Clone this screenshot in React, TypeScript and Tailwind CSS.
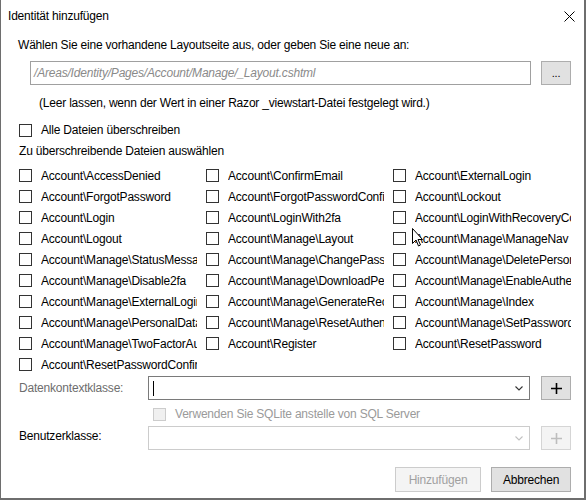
import React from "react";

const files = [
  "Account\\AccessDenied",
  "Account\\ConfirmEmail",
  "Account\\ExternalLogin",
  "Account\\ForgotPassword",
  "Account\\ForgotPasswordConfirmation",
  "Account\\Lockout",
  "Account\\Login",
  "Account\\LoginWith2fa",
  "Account\\LoginWithRecoveryCode",
  "Account\\Logout",
  "Account\\Manage\\Layout",
  "Account\\Manage\\ManageNav",
  "Account\\Manage\\StatusMessage",
  "Account\\Manage\\ChangePassword",
  "Account\\Manage\\DeletePersonalData",
  "Account\\Manage\\Disable2fa",
  "Account\\Manage\\DownloadPersonalData",
  "Account\\Manage\\EnableAuthenticator",
  "Account\\Manage\\ExternalLogins",
  "Account\\Manage\\GenerateRecoveryCodes",
  "Account\\Manage\\Index",
  "Account\\Manage\\PersonalData",
  "Account\\Manage\\ResetAuthenticator",
  "Account\\Manage\\SetPassword",
  "Account\\Manage\\TwoFactorAuthentication",
  "Account\\Register",
  "Account\\ResetPassword",
  "Account\\ResetPasswordConfirmation",
];

function Box({ disabled }: { disabled?: boolean }) {
  return (
    <div
      className={
        disabled
          ? "w-[13px] h-[13px] shrink-0 border border-[#cccccc] bg-[#f0f0f0]"
          : "w-[13px] h-[13px] shrink-0 border border-[#333333] bg-white"
      }
    />
  );
}

function Chevron({ color }: { color: string }) {
  return (
    <svg width="8" height="5" viewBox="0 0 8 5">
      <path d="M0.5 0.5 L4 4 L7.5 0.5" fill="none" stroke={color} strokeWidth="1.1" />
    </svg>
  );
}

function Plus({ color }: { color: string }) {
  return (
    <svg width="11" height="11" viewBox="0 0 11 11">
      <path d="M5.5 0 V11 M0 5.5 H11" stroke={color} strokeWidth="1.6" />
    </svg>
  );
}

export default function App() {
  return (
    <div
      className="relative w-[586px] h-[500px] bg-white border-l border-r-2 border-b-2 border-[#6e6e6e] text-[12px] leading-[16px] tracking-[-0.2px] text-black overflow-hidden"
      style={{ fontFamily: '"Liberation Sans", Arial, sans-serif' }}
    >
      {/* title bar */}
      <div className="h-[32px] flex items-center justify-between pl-[7px] pr-[9px]">
        <span>Identität hinzufügen</span>
        <svg width="11" height="11" viewBox="0 0 11 11">
          <path d="M0.5 0.5 L10.5 10.5 M10.5 0.5 L0.5 10.5" stroke="#000" strokeWidth="1" />
        </svg>
      </div>

      <div className="pl-[17px] pr-[13px]">
        <div className="mt-[5px]">Wählen Sie eine vorhandene Layoutseite aus, oder geben Sie eine neue an:</div>

        <div className="mt-[8px] flex items-center pl-[12px] gap-[10px]">
          <div className="w-[502px] h-[24px] border border-[#a0a0a0] flex items-center px-[3px] italic text-[#8a8a8a]">
            /Areas/Identity/Pages/Account/Manage/_Layout.cshtml
          </div>
          <div className="w-[30px] h-[24px] border border-[#adadad] bg-[#e1e1e1] flex items-end justify-center pb-[3px] text-[11px]">
            ...
          </div>
        </div>

        <div className="mt-[10px] pl-[21px]">(Leer lassen, wenn der Wert in einer Razor _viewstart-Datei festgelegt wird.)</div>

        <div className="mt-[11px] flex items-center gap-[9px] pl-px">
          <Box />
          <span>Alle Dateien überschreiben</span>
        </div>

        <div className="mt-[5px] pl-px">Zu überschreibende Dateien auswählen</div>

        <div className="mt-[6px] grid grid-cols-[187px_187px_187px] pl-px">
          {files.map((f) => (
            <div key={f} className="h-[21px] flex items-center gap-[9px]">
              <Box />
              <span className="w-[156px] overflow-hidden whitespace-nowrap">{f}</span>
            </div>
          ))}
        </div>

        <div className="mt-px flex items-center">
          <span className="w-[130px] pl-px text-[#6d6d6d]">Datenkontextklasse:</span>
          <div className="w-[384px] h-[24px] border border-[#7a7a7a] flex items-center justify-between pl-[4px] pr-[6px]">
            <div className="w-px h-[15px] bg-black" />
            <Chevron color="#333333" />
          </div>
          <div className="ml-[11px] w-[30px] h-[24px] border border-[#adadad] bg-[#e1e1e1] flex items-center justify-center">
            <Plus color="#000" />
          </div>
        </div>

        <div className="mt-[6px] flex items-center gap-[9px] pl-[135px] text-[#9a9a9a]">
          <Box disabled />
          <span>Verwenden Sie SQLite anstelle von SQL Server</span>
        </div>

        <div className="mt-[4px] flex items-center">
          <span className="w-[130px] pl-px -mt-[4px]">Benutzerklasse:</span>
          <div className="w-[384px] h-[24px] border border-[#cccccc] flex items-center justify-end pr-[6px]">
            <Chevron color="#c0c0c0" />
          </div>
          <div className="ml-[11px] w-[30px] h-[24px] border border-[#d5d5d5] bg-[#f4f4f4] flex items-center justify-center">
            <Plus color="#bdbdbd" />
          </div>
        </div>

        <div className="mt-[17px] flex justify-end gap-[10px]">
          <div className="w-[86px] h-[25px] border border-[#cccccc] bg-[#f4f4f4] text-[#a0a0a0] flex items-center justify-center">
            Hinzufügen
          </div>
          <div className="w-[80px] h-[25px] border border-[#adadad] bg-[#e1e1e1] flex items-center justify-center">
            Abbrechen
          </div>
        </div>
      </div>

      {/* mouse pointer */}
      <svg className="absolute left-[411px] top-[228px]" width="12" height="19" viewBox="0 0 12 19">
        <path d="M0.5 0.5 L0.5 15.5 L4 12 L6.5 18 L8.5 17 L6 11.5 L10.5 11.5 Z" fill="#fff" stroke="#000" strokeWidth="1" strokeLinejoin="round" />
      </svg>
    </div>
  );
}
